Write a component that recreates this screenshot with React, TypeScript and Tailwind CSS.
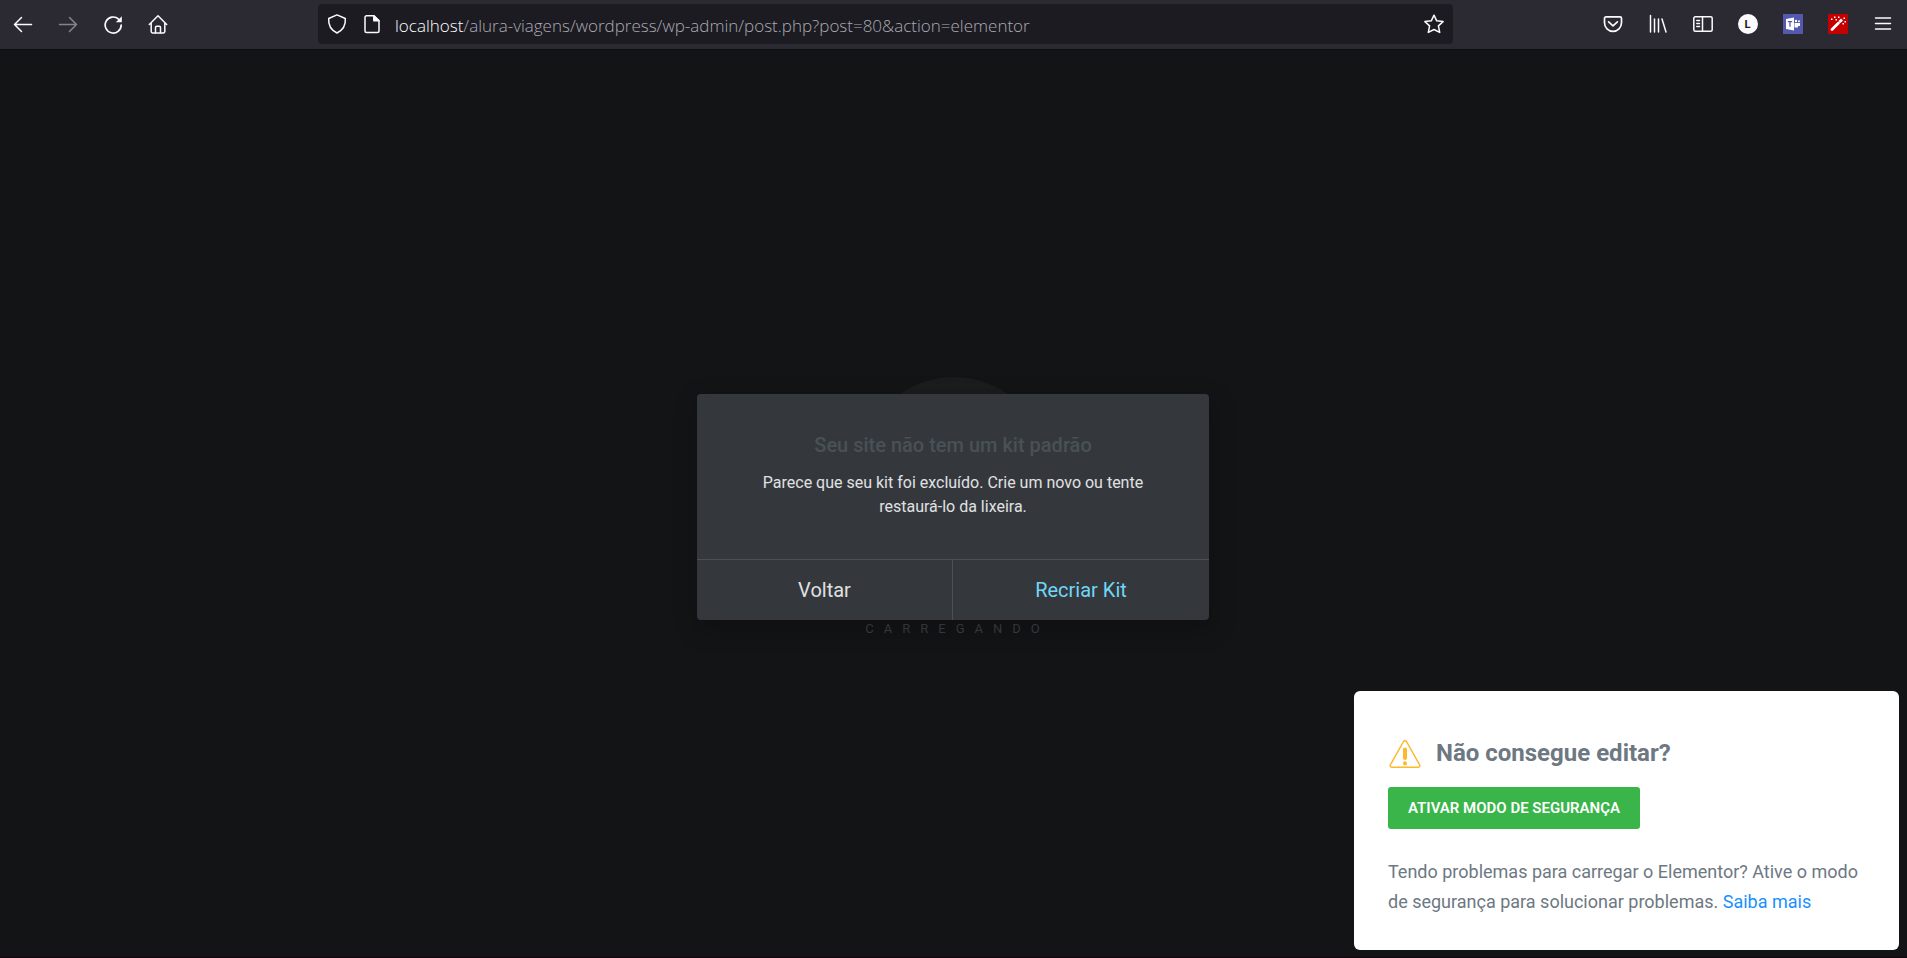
import React from 'react';

const iconProps = {
  width: 20,
  height: 20,
  viewBox: '0 0 20 20',
  fill: 'none',
  stroke: 'currentColor',
  strokeWidth: 1.5,
  strokeLinecap: 'round' as const,
  strokeLinejoin: 'round' as const,
  'aria-hidden': true,
};

function ToolbarButton({ label, disabled, children }: { label: string; disabled?: boolean; children: React.ReactNode }) {
  return (
    <button
      type="button"
      aria-label={label}
      disabled={disabled}
      className="flex h-10 w-[45px] shrink-0 items-center justify-center text-[#fbfbfe] disabled:text-[#85848a]"
    >
      {children}
    </button>
  );
}

function Toolbar() {
  return (
    <header className="flex h-[50px] items-start justify-between border-b border-[#0c0c0d] bg-[#2b2a33] pt-1">
      <nav className="flex w-[318px] shrink-0 items-center">
        <ToolbarButton label="Voltar página">
          <svg {...iconProps}><path d="M18.500 10.500H1.500M8.500 3.500l-7 7 7 7" /></svg>
        </ToolbarButton>
        <ToolbarButton label="Avançar página" disabled>
          <svg {...iconProps}><path d="M1.500 10.500h17M11.500 3.500l7 7-7 7" /></svg>
        </ToolbarButton>
        <ToolbarButton label="Recarregar">
          <svg {...iconProps} strokeWidth="1.700">
            <path d="M18.200 11a8 8 0 1 1-2.600-5.900" />
            <path d="M18.800 2.200v6h-6z" fill="currentColor" stroke="none" />
          </svg>
        </ToolbarButton>
        <ToolbarButton label="Página inicial">
          <svg {...iconProps}>
            <path d="M1.300 10.500 10 1.800l8.700 8.700M3.200 9v8.500A1.500 1.500 0 0 0 4.700 19h10.600a1.500 1.500 0 0 0 1.500-1.500V9" />
            <path d="M7.500 18.800v-5.300a1.200 1.200 0 0 1 1.200-1.200h2.600a1.200 1.200 0 0 1 1.200 1.200v5.300" />
          </svg>
        </ToolbarButton>
      </nav>

      <div className="flex h-10 min-w-0 grow items-center rounded bg-[#1c1b22] pr-[9px] pl-[9px] text-[#fbfbfe]">
        <svg {...iconProps} className="shrink-0">
          <path d="M10 .900 18.300 4.500c.5 6-2.300 11.500-8.300 14.500C4 16 1.200 10.500 1.700 4.500z" />
        </svg>
        <svg {...iconProps} className="ml-[15px] shrink-0">
          <path d="M4.500 1.800H12l5 5v10.200a1.500 1.500 0 0 1-1.500 1.500h-11A1.500 1.500 0 0 1 3 17V3.300a1.500 1.500 0 0 1 1.500-1.500z" />
          <path d="M11.800 1.800v5H17z" fill="currentColor" />
        </svg>
        <p className="ml-[13px] grow truncate pt-[3px] font-['Open_Sans',sans-serif] text-[17px] font-light text-[#abaab2]">
          <span className="text-white">localhost</span>/alura-viagens/wordpress/wp-admin/post.php?post=80&amp;action=elementor
        </p>
        <button type="button" aria-label="Favoritar" className="shrink-0">
          <svg {...iconProps}>
            <path d="m10 1.200 2.700 5.600 6.400.8-4.700 4.300 1.300 6.500L10 15.500l-5.700 2.900 1.300-6.500L.900 7.600l6.400-.8z" />
          </svg>
        </button>
      </div>

      <div className="flex w-[454px] shrink-0 items-center justify-end pr-0.5">
        <ToolbarButton label="Pocket">
          <svg {...iconProps} strokeWidth="1.700">
            <path d="M3 2.800h14a1.500 1.500 0 0 1 1.500 1.500v4.500a8.500 8.500 0 0 1-17 0V4.300A1.500 1.500 0 0 1 3 2.800z" />
            <path d="m5.600 7.800 4.400 4 4.400-4" />
          </svg>
        </ToolbarButton>
        <ToolbarButton label="Biblioteca">
          <svg {...iconProps}><path d="M2.500 1.500v16.500M6.500 5v13M10.500 5v13M14 5l4 13" /></svg>
        </ToolbarButton>
        <ToolbarButton label="Barra lateral">
          <svg {...iconProps}>
            <rect x=".8" y="2.800" width="18.400" height="14.400" rx="1.500" />
            <path d="M9.500 2.800v14.400M3.800 6.500h2.700M3.800 9.500h2.700M3.800 12.500h2.700" />
          </svg>
        </ToolbarButton>
        <ToolbarButton label="Conta">
          <span className="flex size-5 items-center justify-center rounded-full bg-[#fbfbfe] font-['Inter',sans-serif] text-[11px] leading-5 font-bold text-[#1c1b22]">L</span>
        </ToolbarButton>
        <ToolbarButton label="Teams">
          <svg width="20" height="20" viewBox="0 0 20 20" aria-hidden="true">
            <path fill="#5558af" d="M0 0h20v20H0z" />
            <path fill="#fff" d="m3 5 8-1.500v13L3 15z" />
            <path stroke="#5558af" strokeWidth="1.300" d="M4.800 7.700h4.400M7 7.700v5" />
            <circle cx="13" cy="7" r="1.200" fill="#fff" />
            <circle cx="16" cy="7.200" r="1" fill="#fff" />
            <path fill="#fff" d="M11.500 9H17v3h-2v1.500h-3.500z" />
          </svg>
        </ToolbarButton>
        <ToolbarButton label="Varinha">
          <svg width="20" height="20" viewBox="0 0 20 20" aria-hidden="true">
            <rect width="20" height="20" rx="1" fill="#c40000" />
            <path stroke="#fff" strokeWidth="2.800" strokeLinecap="round" d="m4 15.500 6.500-6.500" />
            <path stroke="#fff" strokeWidth="2.800" d="m11.500 8 2.500-2.500" />
            <path fill="#fff" d="M6 2.500h1.500V4H6zM10 2.500h1.500V4H10zM15.500 3.500H17V5h-1.500zM16.500 7H18v1.500h-1.500zM3 4.500h1.500V6H3zM7.500 5H9v1.500H7.500zM14.500 9H16v1.500h-1.500z" />
          </svg>
        </ToolbarButton>
        <ToolbarButton label="Menu">
          <svg {...iconProps}><path d="M2.500 4h15M2.500 9.500h15M2.500 15h15" /></svg>
        </ToolbarButton>
      </div>
    </header>
  );
}

function KitDialog() {
  return (
    <div
      role="dialog"
      aria-labelledby="kit-title"
      className="relative w-[512px] overflow-hidden rounded bg-[#34383c] text-center shadow-[2px_8px_23px_3px_rgba(0,0,0,0.2)]"
    >
      <div className="px-[50px] pt-[35px] pb-10">
        <h1 id="kit-title" className="text-xl leading-8 font-medium text-[#495157]">Seu site não tem um kit padrão</h1>
        <p className="mt-2.5 text-base leading-6 text-[#e0e1e3]">
          Parece que seu kit foi excluído. Crie um novo ou tente restaurá-lo da lixeira.
        </p>
      </div>
      <div className="grid h-[61px] grid-cols-2 border-t border-[#4c4f56] text-xl">
        <button type="button" className="border-r border-[#4c4f56] text-[#e0e1e3]">Voltar</button>
        <button type="button" className="text-[#71d7f7]">Recriar Kit</button>
      </div>
    </div>
  );
}

function SafeModePanel() {
  return (
    <aside className="absolute right-2 bottom-[7px] w-[545px] rounded-md bg-white px-[34px] pt-11 pb-[33px] text-[#6d7882]">
      <div className="flex items-center gap-[14px]">
        <svg width="34" height="34" viewBox="0 0 34 34" fill="none" stroke="#fcb92c" aria-hidden="true">
          <path strokeWidth="1.500" strokeLinejoin="round" d="M15.500 5.500a1.800 1.800 0 0 1 3 0l13.200 23.500a1.500 1.500 0 0 1-1.300 2.200H3.600A1.500 1.500 0 0 1 2.300 29z" />
          <path strokeWidth="4" strokeLinecap="round" d="M17 13.500v8.500M17 27.300v.1" />
        </svg>
        <h2 className="text-2xl leading-9 font-bold">Não consegue editar?</h2>
      </div>
      <button type="button" className="mt-4 h-[42px] rounded-[3px] bg-[#39b54a] px-5 text-[15px] font-semibold text-white">
        ATIVAR MODO DE SEGURANÇA
      </button>
      <p className="mt-7 text-lg leading-[30px]">
        Tendo problemas para carregar o Elementor? Ative o modo de segurança para solucionar problemas.{' '}
        <a href="#" className="text-[#1a8fff]">Saiba mais</a>
      </p>
    </aside>
  );
}

export default function App() {
  return (
    <div className="flex min-h-screen flex-col border-b border-[#12060f] bg-[#131416] font-['Roboto',sans-serif]">
      <Toolbar />
      <main className="relative flex grow items-center justify-center overflow-hidden pt-[7px] pr-px">
        {/* loading screen behind the dialog */}
        <div className="absolute inset-0 flex flex-col items-center justify-center pt-2">
          <div className="size-[188px] rounded-full bg-[#1b1c1e]" />
          <p className="mt-[54px] pl-2 text-[13px] tracking-[10px] text-[#3b3d40]">CARREGANDO</p>
        </div>
        <KitDialog />
        <SafeModePanel />
      </main>
    </div>
  );
}
